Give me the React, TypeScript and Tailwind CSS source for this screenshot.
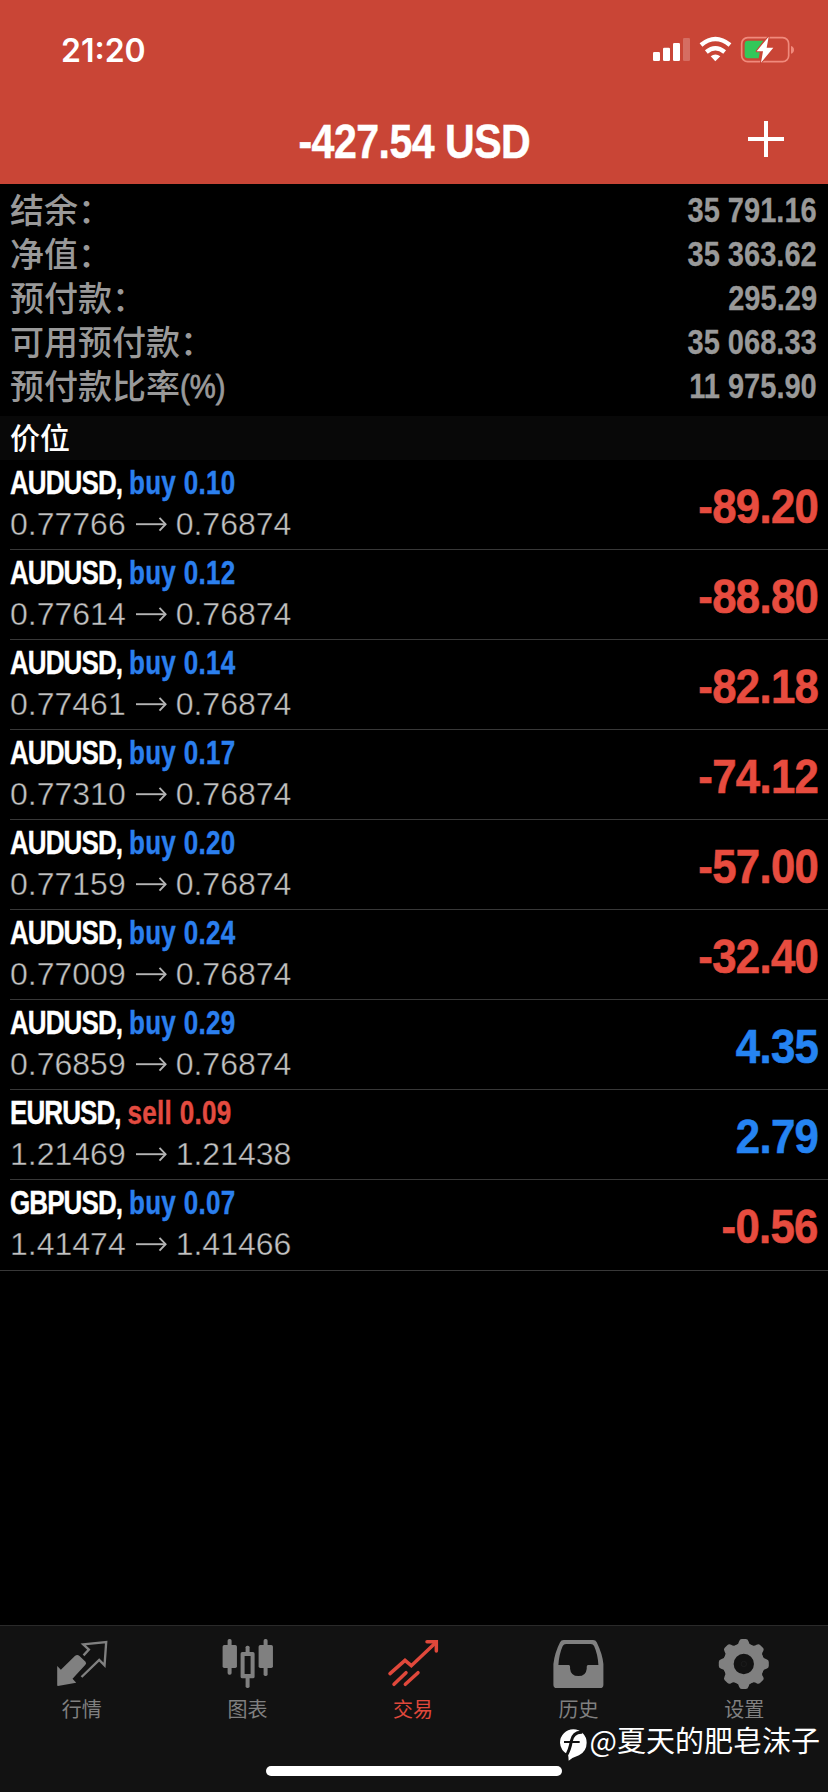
import React from "react";

type Side = "buy" | "sell";

interface Position {
  symbol: string;
  side: Side;
  volume: string;
  open: string;
  current: string;
  profit: string;
}

const summary: { label: string; unit?: string; value: string }[] = [
  { label: "结余：", value: "35 791.16" },
  { label: "净值：", value: "35 363.62" },
  { label: "预付款：", value: "295.29" },
  { label: "可用预付款：", value: "35 068.33" },
  { label: "预付款比率", unit: "(%)", value: "11 975.90" },
];

const positions: Position[] = [
  { symbol: "AUDUSD", side: "buy", volume: "0.10", open: "0.77766", current: "0.76874", profit: "-89.20" },
  { symbol: "AUDUSD", side: "buy", volume: "0.12", open: "0.77614", current: "0.76874", profit: "-88.80" },
  { symbol: "AUDUSD", side: "buy", volume: "0.14", open: "0.77461", current: "0.76874", profit: "-82.18" },
  { symbol: "AUDUSD", side: "buy", volume: "0.17", open: "0.77310", current: "0.76874", profit: "-74.12" },
  { symbol: "AUDUSD", side: "buy", volume: "0.20", open: "0.77159", current: "0.76874", profit: "-57.00" },
  { symbol: "AUDUSD", side: "buy", volume: "0.24", open: "0.77009", current: "0.76874", profit: "-32.40" },
  { symbol: "AUDUSD", side: "buy", volume: "0.29", open: "0.76859", current: "0.76874", profit: "4.35" },
  { symbol: "EURUSD", side: "sell", volume: "0.09", open: "1.21469", current: "1.21438", profit: "2.79" },
  { symbol: "GBPUSD", side: "buy", volume: "0.07", open: "1.41474", current: "1.41466", profit: "-0.56" },
];

function StatusIcons() {
  return (
    <svg className="mb-px h-[29px] w-[143px]" viewBox="714 105 429 87" fill="none">
      <g fill="#fff">
        <rect x="717" y="156" width="21" height="27" rx="4" />
        <rect x="747" y="143" width="21" height="40" rx="4" />
        <rect x="777" y="129" width="21" height="54" rx="4" />
        <rect x="807" y="114" width="21" height="69" rx="4" opacity="0.22" />
      </g>
      <g stroke="#fff" strokeWidth="13">
        <path d="M861 135 Q904 99 948 135" />
        <path d="M877 156 Q904 133 932 156" />
      </g>
      <path d="M890 169 Q904 158 919 169 L904 184 Z" fill="#fff" />
      <rect x="983" y="113" width="141" height="72" rx="18" stroke="#f08a7c" strokeWidth="5" />
      <path d="M1131 138 Q1140 141 1140 149 Q1140 158 1131 161 Z" fill="#f08a7c" />
      <path d="M1002 122 H1048 L1026 153 H1038 L1034 175 H1002 Q992 175 992 165 V132 Q992 122 1002 122 Z" fill="#33c759" />
      <path
        d="M1064 110 L1028 154 H1047 L1041 188 L1078 143 H1058 Z"
        fill="#fff"
        stroke="#c94536"
        strokeWidth="6"
        paintOrder="stroke"
        strokeLinejoin="round"
      />
    </svg>
  );
}

function PriceArrow() {
  return (
    <svg className="ml-[9px] mr-[9px] h-4 w-[32px]" viewBox="0 0 32 16" fill="none" stroke="#b4b4b4" strokeWidth="1.9">
      <path d="M1 8.2 H31" />
      <path d="M24.5 1.8 L30.6 8.2 L24.5 14.6" />
    </svg>
  );
}

function QuotesIcon() {
  return (
    <svg className="h-[50px] w-[52px] overflow-visible" viewBox="170.4 114 156 150">
      <path
        d="M171 198 L182 209 L224 168 Q231 162 238 168 L256 185 Q260 190 255 195 L217 236 L228 248 L173 258 Q171 258 171 254 Z"
        fill="#808080"
      />
      <path
        d="M244 231 L297 180 L313 196 L318 126 L249 133 L266 149 L250 166"
        fill="none"
        stroke="#808080"
        strokeWidth="7"
        strokeLinejoin="miter"
      />
    </svg>
  );
}

function ChartIcon() {
  return (
    <svg className="h-[50px] w-[52px] overflow-visible" viewBox="667.2 114 156 150" fill="#808080">
      <rect x="684" y="117" width="12" height="107" rx="5" />
      <rect x="669" y="135" width="43" height="69" rx="5" />
      <rect x="792" y="117" width="12" height="111" rx="5" />
      <rect x="777" y="135" width="43" height="69" rx="5" />
      <rect x="738" y="137" width="12" height="24" rx="5" />
      <rect x="738" y="228" width="12" height="36" rx="5" />
      <path
        fillRule="evenodd"
        d="M728 156 H760 Q765 156 765 161 V230 Q765 235 760 235 H728 Q723 235 723 230 V161 Q723 156 728 156 Z M735 168 V222 H753 V168 Z"
      />
    </svg>
  );
}

function TradeIcon() {
  return (
    <svg
      className="h-[50px] w-[52px] overflow-visible"
      viewBox="144 114 156 150"
      fill="none"
      stroke="#e0483b"
      strokeWidth="10.5"
      strokeLinecap="round"
      strokeLinejoin="round"
    >
      <path d="M150 221 L195 181 L214 197 L286 129" strokeLinejoin="miter" />
      <path d="M261 125.500 H289 V153" strokeLinejoin="miter" />
      <path d="M162 253 L198 218" />
      <path d="M196 253 L234 218" />
    </svg>
  );
}

function HistoryIcon() {
  return (
    <svg className="h-[50px] w-[52px] overflow-visible" viewBox="76.8 114 156 150" fill="#808080">
      <path
        fillRule="evenodd"
        d="M106 120 H194 Q202 120 205 127 Q222 162 225 192 V254 Q225 264 215 264 H85 Q75 264 75 254 V192 Q79 158 95 127 Q98 120 106 120 Z M113 132 Q106 132 103 138 Q92 162 90 195 H121 Q125 195 125 200 V206 Q127 228 150 228 Q173 228 175 206 V200 Q175 195 179 195 H210 Q208 162 197 138 Q194 132 187 132 Z"
      />
    </svg>
  );
}

function SettingsIcon() {
  const teeth = [0, 45, 90, 135, 180, 225, 270, 315];
  return (
    <svg className="h-[50px] w-[52px] overflow-visible" viewBox="573.6 114 156 150" fill="#808080">
      <circle cx="648" cy="192" r="46" fill="none" stroke="#808080" strokeWidth="31" />
      {teeth.map((angle) => (
        <path
          key={angle}
          d="M624 136 Q633 133 634 124 Q636 117 642 117 H654 Q660 117 662 124 Q663 133 672 136 L666 150 H630 Z"
          transform={`rotate(${angle} 648 192)`}
        />
      ))}
      <circle cx="648" cy="192" r="8" fill="none" stroke="#1f1f1f" strokeWidth="2" />
    </svg>
  );
}

const tabs: { label: string; icon: React.ReactNode; active?: boolean }[] = [
  { label: "行情", icon: <QuotesIcon /> },
  { label: "图表", icon: <ChartIcon /> },
  { label: "交易", icon: <TradeIcon />, active: true },
  { label: "历史", icon: <HistoryIcon /> },
  { label: "设置", icon: <SettingsIcon /> },
];

function PositionRow({ item, last }: { item: Position; last: boolean }) {
  const sideColor = item.side === "buy" ? "text-[#2b7fee]" : "text-[#e34b40]";
  const profitColor = item.profit.startsWith("-") ? "text-[#e74c3f]" : "text-[#2584f2]";
  return (
    <li className={`ml-[10px] flex h-[90px] justify-between ${last ? "" : "border-b border-[#383838]"}`}>
      <div>
        <div className="flex h-11 origin-left scale-x-[0.765] items-center whitespace-pre text-[34px] font-bold leading-[44px] [-webkit-text-stroke:0.4px_currentColor]">
          <span className="tracking-[-1.2px] text-white">{item.symbol},</span>
          <span className={`ml-[9px] tracking-[0.4px] ${sideColor}`}>
            {item.side} {item.volume}
          </span>
        </div>
        <div className="flex h-10 items-center text-[32px] leading-10 text-[#c2c2c2]">
          <span className="[-webkit-text-stroke:0.4px_#000]">{item.open}</span>
          <PriceArrow />
          <span className="[-webkit-text-stroke:0.4px_#000]">{item.current}</span>
        </div>
      </div>
      <div
        className={`mr-[10px] origin-right scale-x-[0.893] text-[49px] font-bold leading-[92px] tracking-[-0.8px] [-webkit-text-stroke:0.6px_currentColor] ${profitColor}`}
      >
        {item.profit}
      </div>
    </li>
  );
}

export default function App() {
  return (
    <div className="relative flex h-[1792px] w-[828px] flex-col overflow-hidden bg-black font-['Liberation_Sans','Noto_Sans_CJK_SC',sans-serif]">
      <header className="flex h-[184px] flex-col bg-[#c94536]">
        <div className="flex h-[100px] items-center justify-between pl-[61px] pr-[33px]">
          <span className="pt-px font-['Inter',sans-serif] text-[32px] font-semibold leading-[100px] text-white">21:20</span>
          <StatusIcons />
        </div>
        <div className="grid h-[84px] grid-cols-[1fr_auto_1fr] items-center">
          <span />
          <h1 className="mb-[2px] scale-x-[0.838] whitespace-nowrap text-[49px] font-bold leading-[82px] tracking-[-0.6px] text-white [-webkit-text-stroke:0.5px_currentColor]">
            -427.54 USD
          </h1>
          <button className="mb-[6px] mr-[44px] justify-self-end" aria-label="add">
            <svg className="h-9 w-9" viewBox="0 0 36 36" stroke="#fff" strokeWidth="4">
              <path d="M18 0 V36 M0 18 H36" />
            </svg>
          </button>
        </div>
      </header>

      <dl className="h-[232px] pt-1">
        {summary.map((row) => (
          <div key={row.label} className="flex h-11 justify-between pl-[10px] pr-[11px] text-[#999]">
            <dt className="flex text-[34px] font-medium leading-[46px]">
              {row.label}
              {row.unit && (
                <span className="origin-left scale-x-[0.86] leading-[44px] [-webkit-text-stroke:0.8px_currentColor]">
                  {row.unit}
                </span>
              )}
            </dt>
            <dd className="origin-right scale-x-[0.83] text-[35px] font-bold leading-[44px] [-webkit-text-stroke:0.3px_currentColor]">
              {row.value}
            </dd>
          </div>
        ))}
      </dl>

      <h2 className="h-11 bg-[#080808] pl-[10px] text-[30px] font-medium leading-[46px] text-white">价位</h2>

      <ul className="border-b border-[#383838]">
        {positions.map((item, index) => (
          <PositionRow key={index} item={item} last={index === positions.length - 1} />
        ))}
      </ul>

      <footer className="mt-auto flex h-[167px] flex-col items-center border-t border-[#2a2a2a] bg-[#121212]">
        <nav className="grid w-full grid-cols-5">
          {tabs.map((tab) => (
            <a key={tab.label} className="flex flex-col items-center pt-3">
              {tab.icon}
              <span
                className={`mt-1.5 pr-0.5 font-['Noto_Sans_CJK_SC',sans-serif] text-[20px] leading-[30px] ${
                  tab.active ? "text-[#e0483b]" : "text-[#808080]"
                }`}
              >
                {tab.label}
              </span>
            </a>
          ))}
        </nav>
        <div className="mb-4 mt-auto h-[10px] w-[296px] rounded-full bg-white" />
      </footer>

      <div className="absolute right-[8px] top-[1718px] flex items-center gap-[3px]">
        <svg className="mt-[11px] h-8 w-[27px]" viewBox="89 386 81 96">
          <path
            d="M129 387 A40 40 0 0 1 169 427 Q169 452 146 465 Q128 471 115 481 Q115 470 113 463 Q90 450 89 427 A40 40 0 0 1 129 387 Z"
            fill="#fff"
          />
          <g fill="none" stroke="#121212">
            <path d="M156 396 Q129 394 123 422 Q118 452 106 468" strokeWidth="9" />
            <path d="M101 425 H148" strokeWidth="6" />
          </g>
        </svg>
        <span className="mb-[2px] whitespace-nowrap font-['Noto_Sans_CJK_SC',sans-serif] text-[29px] leading-10 text-white">
          @夏天的肥皂沫子
        </span>
      </div>
    </div>
  );
}
